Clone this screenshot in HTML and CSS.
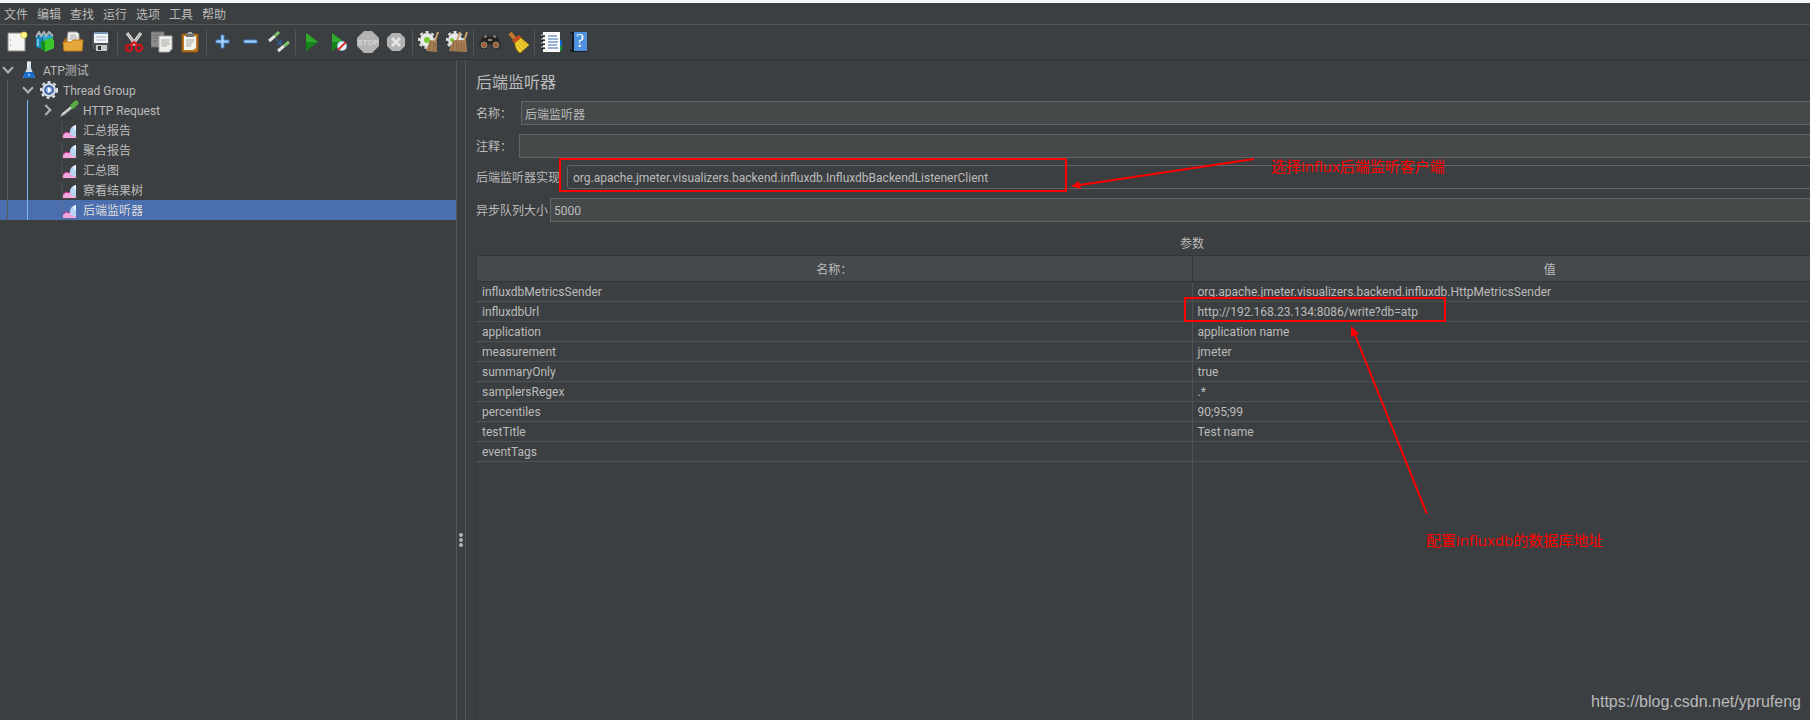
FILE: index.html
```
<!DOCTYPE html>
<html lang="zh-CN">
<head>
<meta charset="utf-8">
<title>后端监听器</title>
<link rel="stylesheet" href="styles.css">
</head>
<body>
<div class="app">

<!-- 菜单栏 -->
<nav class="menubar">
<button>文件</button><button>编辑</button><button>查找</button><button>运行</button><button>选项</button><button>工具</button><button>帮助</button>
</nav>

<!-- 工具栏 -->
<div class="toolbar">
<button title="新建"><svg viewBox="0 0 22 22"><path d="M2 2h17v18H2z" fill="#f4f4f2" stroke="#8e8e8a"/><path d="M4 9h1M4 14h1" stroke="#777"/><circle cx="18" cy="4" r="3" fill="#fff6a0" stroke="#e6cf2e"/></svg></button>
<button title="模板"><svg viewBox="0 0 22 22"><path d="M2 6l6-2v14l-6-2z" fill="#1389bd"/><path d="M8 4l5-1 6 2v13l-8 2z" fill="#2aa5cf"/><path d="M2 6l3-5 2 4 3-4 2 4 3-4 4 4" fill="none" stroke="#a8b4b8" stroke-width="2"/><path d="M7 10l5 0v11l-5-3z" fill="#178d24"/><path d="M11 9l7-2 2 3v7l-9 4z" fill="#3cc528"/><path d="M4 8v7" stroke="#d9f3fb"/></svg></button>
<button title="打开"><svg viewBox="0 0 22 22"><path d="M2 9l3-3h12l3 4v8H2z" fill="#a46b12"/><path d="M6 1h9l2 2v9H5z" fill="#f3f3f1" stroke="#999"/><path d="M8 4h6M8 6h7M7 8h8" stroke="#aaa"/><path d="M1 11h8l2-2h10l-1 11H2z" fill="#e5a83a" stroke="#bd7d15"/></svg></button>
<button title="保存"><svg viewBox="0 0 22 22"><path d="M1 1h19v19H4l-3-3z" fill="#4b4f54" stroke="#2b2d30"/><path d="M4 1h14v11H4z" fill="#f1f5f9"/><path d="M4 1h14v2H4z" fill="#7996b8"/><path d="M6 6h10M6 9h10" stroke="#aab8c6"/><path d="M6 14h11v6H6z" fill="#c6c8ca"/><path d="M8 15h3v4H8z" fill="#303234"/></svg></button>
<span class="sep"></span>
<button title="剪切"><svg viewBox="0 0 22 22"><path d="M4 2l9 12M18 2L9 14" stroke="#e2e2e0" stroke-width="3"/><path d="M4 2l9 12M18 2L9 14" stroke="#999" stroke-width="1"/><ellipse cx="6" cy="17" rx="3" ry="3" fill="none" stroke="#dc1118" stroke-width="2"/><ellipse cx="16" cy="17" rx="3" ry="3" fill="none" stroke="#dc1118" stroke-width="2"/><path d="M8 14l3-3 3 3" fill="none" stroke="#dc1118" stroke-width="2"/></svg></button>
<button title="复制"><svg viewBox="0 0 22 22"><path d="M0 1h13v15H0z" fill="#8c8e8d" stroke="#6f7171"/><path d="M2 4h8M2 7h5M2 10h4" stroke="#696b6b"/><path d="M8 5h13v13l-3 3H8z" fill="#f0f1ec" stroke="#aaa"/><path d="M10 9h9M10 11h8M10 13h9M10 15h6" stroke="#aaa"/><path d="M18 21v-3h3" fill="#ccc"/></svg></button>
<button title="粘贴"><svg viewBox="0 0 22 22"><path d="M3 3h16v18H3z" fill="#be7920" stroke="#8e5714"/><path d="M5 5h12v12l-3 2H5z" fill="#f2f2ee"/><path d="M7 2h8v4H7z" fill="#73756f"/><path d="M9 1h4v2H9z" fill="#aaa"/><path d="M7 9h8M7 11h8M7 13h6M7 15h5" stroke="#aaa"/></svg></button>
<span class="sep"></span>
<button title="全部展开"><svg viewBox="0 0 22 22"><path d="M9 4h3v5h5v3h-5v5H9v-5H4V9h5z" fill="#a8d3fa" stroke="#3c7fc6"/></svg></button>
<button title="全部折叠"><svg viewBox="0 0 22 22"><path d="M4 9h13v3H4z" fill="#a8d3fa" stroke="#3c7fc6"/></svg></button>
<button title="切换"><svg viewBox="0 0 22 22"><path d="M1 10L7 5M10 20l6-5" stroke="#e1e1df" stroke-width="3"/><path d="M7 5l4-4M16 15l5-4" stroke="#7fc46b" stroke-width="3"/><path d="M8 8l5 5M13 9v4H9" stroke="#2f74ce" fill="none"/></svg></button>
<span class="sep"></span>
<button title="启动"><svg viewBox="0 0 22 22"><path d="M5 2l12 9L5 20z" fill="#14851a"/><path d="M5 2l12 9H5z" fill="#2faa2e"/></svg></button>
<button title="不停顿开始"><svg viewBox="0 0 22 22"><path d="M3 2l12 9L3 20z" fill="#14851a"/><path d="M3 2l12 9H3z" fill="#2faa2e"/><circle cx="13" cy="15" r="5" fill="#9bc0e8"/><circle cx="13" cy="15" r="4" fill="#eaf1fa"/><path d="M9 19l8-8" stroke="#d53030" stroke-width="2"/></svg></button>
<button title="停止"><svg viewBox="0 0 22 22"><path d="M7 0h8l7 7v8l-7 7H7l-7-7V7z" fill="#b4b4b4"/><text x="11" y="14" class="stop-text">STOP</text></svg></button>
<button title="关闭"><svg viewBox="0 0 22 22"><path d="M7 2h8l5 5v8l-5 5H7l-5-5V7z" fill="#b4b4b4"/><path d="M7 7l8 8M15 7l-8 8" stroke="#e4e4e4" stroke-width="3"/></svg></button>
<span class="sep"></span>
<button title="清除"><svg viewBox="0 0 22 22"><circle cx="9" cy="9" r="7" fill="#e8e8e8"/><circle cx="9" cy="9" r="8" fill="none" stroke="#e8e8e8" stroke-width="2" stroke-dasharray="3 3"/><circle cx="9" cy="9" r="3" fill="#75c92e"/><path d="M20 1l-3 9" stroke="#c8a06c" stroke-width="2"/><path d="M12 9l7 1 0 11-11-1z" fill="#a88056"/><path d="M13 11l-2 9M16 11l-1 9M18 12v8" stroke="#8a6541"/></svg></button>
<button title="清除全部"><svg viewBox="0 0 22 22"><circle cx="9" cy="9" r="7" fill="#e8e8e8"/><circle cx="9" cy="9" r="8" fill="none" stroke="#e8e8e8" stroke-width="2" stroke-dasharray="3 3"/><path d="M14 1l-3 9M21 1l-3 9" stroke="#c8a06c" stroke-width="2"/><circle cx="6" cy="9" r="2" fill="#75c92e"/><path d="M7 9h13l1 12-18-1z" fill="#a88056"/><path d="M8 11l-2 9M11 11l-1 9M13 12v8M16 11l-1 9M18 12v8" stroke="#8a6541"/></svg></button>
<span class="sep"></span>
<button title="查找"><svg viewBox="0 0 22 22"><path d="M4 5l5-1 2 3 2-3 5 1 4 9-2 4h-5l-3-5H10l-3 5H2l-2-4z" fill="#26231f"/><path d="M5 6l3-1M14 5l3 1M9 9h4" stroke="#88847e" stroke-width="2"/><circle cx="5" cy="14" r="3" fill="#a35e2f" stroke="#8d8880"/><circle cx="17" cy="14" r="3" fill="#a35e2f" stroke="#8d8880"/></svg></button>
<button title="重置查找"><svg viewBox="0 0 22 22"><path d="M3 2l5 6" stroke="#c07a2a" stroke-width="4"/><path d="M5 9l7-5 3 3-7 6z" fill="#c74a26"/><path d="M8 12l6-5 8 7-9 8c-3-2-5-6-5-10z" fill="#f0d130" stroke="#ba8d12"/><path d="M10 13l5 6M12 11l5 6M14 9l5 6" stroke="#c9a51c"/></svg></button>
<span class="sep"></span>
<button title="函数助手"><svg viewBox="0 0 22 22"><path d="M19 9h3v6h-3z" fill="#1761c8"/><path d="M19 15h3v5h-3z" fill="#159434"/><path d="M3 1h17v20H3z" fill="#fafafa"/><path d="M1 5h4M1 9h4M1 13h4M1 17h4" stroke="#222" stroke-width="2"/><path d="M1 4h4M1 8h4M1 12h4M1 16h4" stroke="#ddd"/><path d="M8 5h9M8 8h10M8 11h10M8 14h9M8 17h10" stroke="#376bb5"/></svg></button>
<button title="帮助"><svg viewBox="0 0 22 22"><path d="M2 1h17v20H4l-2-1z" fill="#141a22"/><path d="M6 1h13v19H6z" fill="#4f91df"/><path d="M3 2v17" stroke="#54606e"/><text x="12" y="16" class="help-text">?</text></svg></button>
</div>

<div class="workspace">
<!-- 左侧测试计划树 -->
<ul class="tree">
<li><span class="arrow down"></span><svg class="ico" viewBox="0 0 20 20"><path d="M8 2h4v6l4 10H4L8 8z" fill="#cfdcea"/><path d="M6 12h8l2 5-1 1H5l-1-1z" fill="#1d6fce"/><path d="M8 2h4M9 3v5" stroke="#fff"/><circle cx="10" cy="15" r="1" fill="#9fd0ff"/></svg><span>ATP测试</span></li>
<li class="lv1"><span class="arrow down"></span><svg class="ico" viewBox="0 0 20 20"><circle cx="10" cy="10" r="7" fill="#dde3ea"/><circle cx="10" cy="10" r="8" fill="none" stroke="#dde3ea" stroke-width="2" stroke-dasharray="3 3"/><circle cx="10" cy="10" r="4" fill="#9ab8e4" stroke="#4468a6" stroke-width="2"/><path d="M9 7l3 3-3 3z" fill="#fff"/></svg><span>Thread Group</span></li>
<li class="lv2"><span class="arrow right"></span><svg class="ico" viewBox="0 0 20 20"><path d="M3 18h12" stroke="#2f3132"/><path d="M1 17l2-4 9-7 2 2-9 7z" fill="#b8bab8"/><path d="M4 14l8-7" stroke="#eee"/><path d="M11 4l5 5" stroke="#2c5d28" stroke-width="2"/><path d="M14 6l3-3" stroke="#5aaa48" stroke-width="5" stroke-linecap="round"/></svg><span>HTTP Request</span></li>
<li class="lv2"><span class="arrow"></span><svg class="ico" viewBox="0 0 20 20"><use href="#chart"/></svg><span>汇总报告</span></li>
<li class="lv2"><span class="arrow"></span><svg class="ico" viewBox="0 0 20 20"><use href="#chart"/></svg><span>聚合报告</span></li>
<li class="lv2"><span class="arrow"></span><svg class="ico" viewBox="0 0 20 20"><use href="#chart"/></svg><span>汇总图</span></li>
<li class="lv2"><span class="arrow"></span><svg class="ico" viewBox="0 0 20 20"><use href="#chart"/></svg><span>察看结果树</span></li>
<li class="lv2 selected"><span class="arrow"></span><svg class="ico" viewBox="0 0 20 20"><use href="#chart"/></svg><span>后端监听器</span></li>
</ul>

<div class="splitter"><i></i><i></i><i></i></div>

<!-- 右侧配置面板 -->
<main class="panel">
<h1>后端监听器</h1>
<div class="field name"><label for="name">名称：</label><input id="name" type="text" value="后端监听器"></div>
<div class="field comment"><label for="comment">注释：</label><input id="comment" type="text"></div>
<div class="field impl"><label for="impl">后端监听器实现</label><select id="impl"><option>org.apache.jmeter.visualizers.backend.influxdb.InfluxdbBackendListenerClient</option></select></div>
<div class="field queue"><label for="queue">异步队列大小</label><input id="queue" type="text" value="5000"></div>
<div class="params">
<table>
<caption>参数</caption>
<thead><tr><th>名称：</th><th>值</th></tr></thead>
<tbody>
<tr><td>influxdbMetricsSender</td><td>org.apache.jmeter.visualizers.backend.influxdb.HttpMetricsSender</td></tr>
<tr><td>influxdbUrl</td><td>http://192.168.23.134:8086/write?db=atp</td></tr>
<tr><td>application</td><td>application name</td></tr>
<tr><td>measurement</td><td>jmeter</td></tr>
<tr><td>summaryOnly</td><td>true</td></tr>
<tr><td>samplersRegex</td><td>.*</td></tr>
<tr><td>percentiles</td><td>90;95;99</td></tr>
<tr><td>testTitle</td><td>Test name</td></tr>
<tr><td>eventTags</td><td></td></tr>
</tbody>
</table>
<div class="rest"><span></span><span></span></div>
</div>
</main>
</div>
</div>

<!-- 标注 -->
<div class="mark mark-impl"></div>
<div class="mark mark-url"></div>
<svg class="arrows" width="1810" height="720">
<path d="M1254 159L1080 185M1427 514L1355 335" stroke="#f00" stroke-width="2"/>
<path d="M1071 186L1079 181L1081 189zM1351 326L1351 337L1359 334z" fill="#f00"/>
</svg>
<p class="note note-impl">选择influx后端监听客户端</p>
<p class="note note-url">配置influxdb的数据库地址</p>
<p class="watermark">https://blog.csdn.net/yprufeng</p>

<!-- 公用的图表图标 -->
<svg class="defs"><defs><g id="chart"><path d="M3 2v16h16" fill="none" stroke="#65696b" stroke-dasharray="1 1"/><path d="M4 18v-3l3-3 3 1 3-3 4 3v5z" fill="#f3a6dc"/><path d="M4 14l3-2 3 1 3-3" fill="none" stroke="#c23a9a"/><path d="M11 12c0-4 2-6 6-7v11c-3 1-5 0-6-4z" fill="#b8d5f3"/><path d="M14 7c1-1 2-2 3-2v6z" fill="#eef6ff"/></g></defs></svg>
</body>
</html>
```
FILE: styles.css
```
* {
  box-sizing: border-box;
}

body {
  margin: 0;
  position: relative;
  background: #3c3f41;
  color: #bbb;
  font: 12px/20px Roboto, "Noto Sans CJK SC", sans-serif;
}

button, input, select {
  margin: 0;
  color: inherit;
  font: inherit;
}

.app {
  display: flex;
  flex-direction: column;
  height: 100vh;
  overflow: hidden;
  border-top: 3px solid #f5f5f5;
}

/* 菜单栏 */
.menubar {
  display: flex;
  gap: 9px;
  height: 22px;
  padding: 3px 0 0 4px;
  border-bottom: 1px solid #555;
  line-height: 18px;
}

.menubar button {
  padding: 0;
  border: 0;
  background: none;
}

/* 工具栏 */
.toolbar {
  display: flex;
  align-items: center;
  height: 35px;
  padding-left: 3px;
  border-bottom: 1px solid #323537;
}

.toolbar button {
  width: 28px;
  height: 28px;
  padding: 3px;
  border: 0;
  background: none;
}

.toolbar svg {
  display: block;
  width: 22px;
  height: 22px;
}

.sep {
  width: 5px;
  height: 25px;
  background: linear-gradient(#555, #555) 2px 0 / 1px 100% no-repeat;
}

.stop-text {
  font: bold 8px "Liberation Sans", sans-serif;
  fill: #d4d4d4;
  text-anchor: middle;
}

.help-text {
  font: 18px "Liberation Serif", serif;
  fill: #fff;
  text-anchor: middle;
}

/* 内容比窗口宽，右边被截掉 */
.workspace {
  display: flex;
  flex: 1;
  min-height: 0;
  margin-right: -98px;
}

/* 树 */
.tree {
  flex: none;
  width: 456px;
  margin: 0;
  padding: 0;
  list-style: none;
}

.tree li {
  display: flex;
  align-items: center;
  height: 20px;
}

.tree li > span:last-child {
  padding-top: 2px;
}

.tree .lv1 {
  padding-left: 20px;
  background: linear-gradient(#5a5d5f, #5a5d5f) 7px 0 / 1px 100% no-repeat;
}

.tree .lv2 {
  padding-left: 40px;
  background:
    linear-gradient(#5a5d5f, #5a5d5f) 7px 0 / 1px 100% no-repeat,
    linear-gradient(#7db8f0, #7db8f0) 27px 0 / 1px 100% no-repeat;
}

.tree .selected {
  background-color: #4b6eaf;
  color: #ddd;
}

.arrow {
  display: flex;
  justify-content: center;
  width: 15px;
  margin-right: 4px;
}

.down::before, .right::before {
  content: "";
  width: 6px;
  height: 6px;
  border: solid #afb1b3;
  border-width: 0 2px 2px 0;
  transform: rotate(45deg);
}

.down::before {
  margin-bottom: 4px;
}

.right::before {
  margin-right: 4px;
  transform: rotate(-45deg);
}

.ico {
  width: 20px;
  height: 20px;
  margin-right: 4px;
}

/* 分隔条 */
.splitter {
  display: flex;
  flex: none;
  flex-direction: column;
  justify-content: center;
  align-items: center;
  gap: 1px;
  width: 10px;
  padding-top: 300px;
  border: solid #555;
  border-width: 0 1px;
}

.splitter i {
  width: 4px;
  height: 4px;
  border-radius: 2px;
  background: #afb1b3;
}

/* 面板 */
.panel {
  display: flex;
  flex: 1;
  flex-direction: column;
  padding-left: 10px;
}

.panel h1 {
  margin: 11px 0 6px;
  font-size: 16px;
  font-weight: normal;
  line-height: 24px;
}

.field {
  display: flex;
  align-items: center;
  height: 24px;
  margin-bottom: 9px;
}

.field label {
  padding-top: 2px;
}

.field input, .field select {
  flex: 1;
  height: 24px;
  padding: 1px 3px 0;
  border: 1px solid #646464;
  border-radius: 0;
  background: #45494a;
}

.name label {
  width: 45px;
}

.comment {
  margin-bottom: 7px;
}

.comment label {
  width: 43px;
}

.impl label {
  width: 91px;
}

.impl select {
  padding: 1px 5px 0;
  border-radius: 3px;
  background: #3c3f41;
  appearance: none;
}

.queue {
  margin-bottom: 8px;
}

.queue label {
  width: 74px;
}

/* 参数表 */
.params {
  display: flex;
  flex: 1;
  flex-direction: column;
}

table {
  width: 100%;
  border-collapse: collapse;
  table-layout: fixed;
}

caption {
  padding: 4px 0 1px;
}

th {
  height: 26px;
  padding: 2px 0 0;
  border: 1px solid #323537;
  background: #45494b;
  font-weight: normal;
}

td {
  height: 20px;
  padding: 2px 5px 0;
  border: 1px solid #4f5254;
  line-height: 17px;
  white-space: nowrap;
}

td:first-child {
  border-left-color: #323537;
}

.rest {
  display: flex;
  flex: 1;
}

.rest span {
  flex: 1;
  border-left: 1px solid #4f5254;
}

.rest span:first-child {
  border-left-color: #323537;
}

/* 红色标注浮在界面上 */
.mark, .arrows, .note, .watermark {
  position: absolute;
  margin: 0;
}

.mark {
  border: 2px solid #f00;
}

.mark-impl {
  left: 559px;
  top: 158px;
  width: 508px;
  height: 34px;
}

.mark-url {
  left: 1184px;
  top: 297px;
  width: 262px;
  height: 25px;
}

.arrows {
  left: 0;
  top: 0;
}

.note {
  color: #f00;
  font-family: "Open Sans", "Noto Sans CJK SC", sans-serif;
  font-size: 15px;
}

.note-impl {
  left: 1271px;
  top: 156px;
}

.note-url {
  left: 1426px;
  top: 530px;
}

.watermark {
  right: 9px;
  bottom: 8px;
  color: #b9babb;
  font: 16px/20px "Liberation Sans", sans-serif;
}

.defs {
  position: absolute;
  width: 0;
  height: 0;
}
```
